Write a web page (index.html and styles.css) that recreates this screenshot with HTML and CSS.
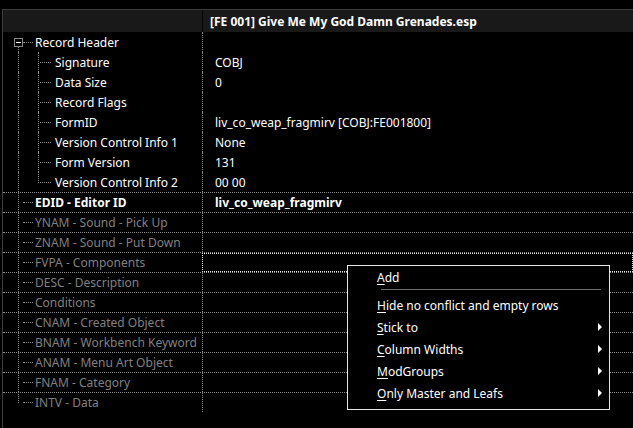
FILE: index.html
```html
<!DOCTYPE html>
<html>
<head>
<meta charset="utf-8">
<link rel="stylesheet" href="styles.css">
</head>
<body>
<div class="frame">
  <div class="header">
    <div class="hcol1"></div>
    <div class="hcol2">[FE 001] Give Me My God Damn Grenades.esp</div>
  </div>
  <div class="rows">
    <div class="row top">
      <div class="name"><span class="box"></span>Record Header</div>
      <div class="val"></div>
    </div>
    <div class="row child"><div class="name">Signature</div><div class="val">COBJ</div></div>
    <div class="row child"><div class="name">Data Size</div><div class="val">0</div></div>
    <div class="row child"><div class="name">Record Flags</div><div class="val"></div></div>
    <div class="row child"><div class="name">FormID</div><div class="val">liv_co_weap_fragmirv [COBJ:FE001800]</div></div>
    <div class="row child"><div class="name">Version Control Info 1</div><div class="val">None</div></div>
    <div class="row child"><div class="name">Form Version</div><div class="val">131</div></div>
    <div class="row child lastchild"><div class="name">Version Control Info 2</div><div class="val">00 00</div></div>
    <div class="row l0 sep bold"><div class="name">EDID - Editor ID</div><div class="val">liv_co_weap_fragmirv</div></div>
    <div class="row l0 sep dim"><div class="name">YNAM - Sound - Pick Up</div><div class="val"></div></div>
    <div class="row l0 sep dim"><div class="name">ZNAM - Sound - Put Down</div><div class="val"></div></div>
    <div class="row l0 sep dim"><div class="name">FVPA - Components</div><div class="val focus"></div></div>
    <div class="row l0 sep dim"><div class="name">DESC - Description</div><div class="val"></div></div>
    <div class="row l0 sep dim"><div class="name">Conditions</div><div class="val"></div></div>
    <div class="row l0 sep dim"><div class="name">CNAM - Created Object</div><div class="val"></div></div>
    <div class="row l0 sep dim"><div class="name">BNAM - Workbench Keyword</div><div class="val"></div></div>
    <div class="row l0 sep dim"><div class="name">ANAM - Menu Art Object</div><div class="val"></div></div>
    <div class="row l0 sep dim"><div class="name">FNAM - Category</div><div class="val"></div></div>
    <div class="row l0 sep dim last"><div class="name">INTV - Data</div><div class="val"></div></div>
  </div>
</div>

<div class="menu">
  <div class="item"><u>A</u>dd</div>
  <div class="msep"></div>
  <div class="item"><u>H</u>ide no conflict and empty rows</div>
  <div class="item sub"><u>S</u>tick to</div>
  <div class="item sub"><u>C</u>olumn Widths</div>
  <div class="item sub"><u>M</u>odGroups</div>
  <div class="item sub"><u>O</u>nly Master and Leafs</div>
</div>
</body>
</html>
```
FILE: styles.css
```css
html, body {
  margin: 0;
  padding: 0;
  background: #000;
  width: 633px;
  height: 428px;
  overflow: hidden;
  font-family: "Noto Sans", "Open Sans", sans-serif;
  font-size: 12px;
  color: #fff;
}

.frame {
  margin-top: 9px;
  margin-left: 2px;
  height: 419px;
  border-top: 1px solid #3c3c3c;
  border-left: 1px solid #3c3c3c;
  box-sizing: border-box;
}

.header {
  display: flex;
  height: 22px;
  background: #191919;
  font-weight: bold;
  line-height: 24px;
}

.hcol1 {
  width: 199px;
  border-right: 1px solid #050505;
}

.hcol2 {
  padding-left: 7px;
  white-space: nowrap;
}

.row {
  display: flex;
  height: 20px;
  line-height: 22px;
  box-sizing: border-box;
}

.row.sep {
  border-top: 1px dotted #8a8a8a;
  line-height: 20px;
}

.name {
  position: relative;
  width: 199px;
  height: 100%;
  flex: none;
  padding-left: 32px;
  box-sizing: border-box;
  white-space: nowrap;
}

.val {
  flex: 1;
  border-left: 1px dotted #8a8a8a;
  padding-left: 12px;
  white-space: nowrap;
}

.bold { font-weight: bold; }
.dim .name { color: #808080; }

/* tree lines */
.row .name::before {
  content: "";
  position: absolute;
  left: 15px;
  top: 0;
  bottom: 0;
  border-left: 1px dotted #8a8a8a;
}
.row.sep .name::before { top: -1px; }
.row.top .name::before { top: 15px; }
.row.last .name::before { bottom: 9px; }

.row.l0 .name::after,
.row.top .name::after {
  content: "";
  position: absolute;
  left: 20px;
  width: 10px;
  top: 9px;
  border-top: 1px dotted #8a8a8a;
}
.row.top .name::after { top: 10px; }

.row.child .name { padding-left: 52px; }
.row.child .name::after {
  content: "";
  position: absolute;
  left: 35px;
  top: 0;
  bottom: 0;
  width: 13px;
  border-left: 1px dotted #8a8a8a;
  background: repeating-linear-gradient(to right, #8a8a8a 0 1px, transparent 1px 2px) no-repeat 1px 10px / 12px 1px;
}
.row.lastchild .name::after { bottom: 9px; }

.box {
  position: absolute;
  left: 11px;
  top: 6px;
  width: 9px;
  height: 9px;
  box-sizing: border-box;
  border: 1px solid #8a8a8a;
  background: #000;
  z-index: 1;
}
.box::after {
  content: "";
  position: absolute;
  left: 1px;
  top: 3px;
  width: 5px;
  height: 1px;
  background: #fff;
}

.focus {
  outline: 1px dotted #e8e8e8;
  outline-offset: -1px;
}

/* context menu */
.menu {
  position: absolute;
  left: 347px;
  top: 265px;
  width: 263px;
  box-sizing: border-box;
  border: 1px solid #e6e6e6;
  background: #000;
  padding-bottom: 5px;
}
.item {
  position: relative;
  height: 22px;
  line-height: 24px;
  padding-left: 29px;
  white-space: nowrap;
}
.item u { text-decoration-thickness: 1px; text-underline-offset: 2px; }
.item.sub::after {
  content: "";
  position: absolute;
  left: 250px;
  top: 7px;
  border-left: 4px solid #fff;
  border-top: 4px solid transparent;
  border-bottom: 4px solid transparent;
}
.msep {
  height: 1px;
  margin: 1px 8px 4px 33px;
  background: #6e6e6e;
}
```
